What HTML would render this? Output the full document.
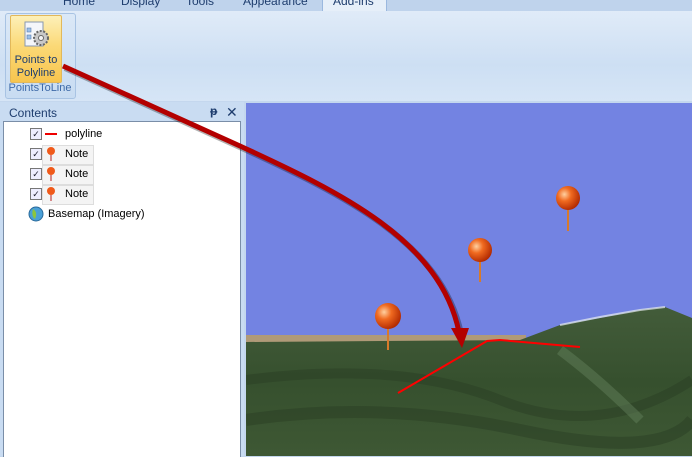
<!DOCTYPE html>
<html><head><style>
body{margin:0;width:692px;height:456px;overflow:hidden;position:relative;font-family:"Liberation Sans",sans-serif;background:#c4d7ee}
.tabs{position:absolute;left:0;top:0;width:692px;height:11px;background:#bfd3ec}
.tab{position:absolute;top:-6px;font-size:12px;color:#1e3d6e}
.ribbon{position:absolute;left:0;top:11px;width:692px;height:90px;background:linear-gradient(#e0ebf8,#cddff3 60%,#d6e5f6)}
.grp{position:absolute;left:5px;top:13px;width:69px;height:84px;border:1px solid #a8c3e3;border-radius:3px;background:linear-gradient(#dbe8f7,#c8dcf2)}
.btn{position:absolute;left:10px;top:15px;width:50px;height:66px;border:1px solid #e2b85a;border-radius:2px;background:linear-gradient(#fdf0b8,#fbd977 45%,#f7c54e)}
.btn span{position:absolute;left:0;top:38px;width:50px;text-align:center;font-size:11px;line-height:13px;color:#1e3d6e}
.glab{position:absolute;left:6px;top:82px;width:68px;text-align:center;font-size:11px;color:#3e6aa8}
.panel{position:absolute;left:0;top:102px;width:244px;height:354px;background:#c9dcf2}
.head{position:absolute;left:3px;top:103px;width:237px;height:18px;font-size:12px;color:#1e3d6e}
.list{position:absolute;left:3px;top:121px;width:236px;height:335px;background:#fff;border:1px solid #7a8ea8;border-bottom:none}
.row{position:absolute;font-size:11px;color:#000}
.cb{position:absolute;width:10px;height:10px;border:1px solid #777;background:#eef;font-size:9px;line-height:10px;text-align:center;color:#223}
.nbox{position:absolute;width:50px;height:18px;border:1px solid #ddd;background:#f4f4f4}
.map{position:absolute;left:246px;top:103px;width:446px;height:353px;background:#7383e2;overflow:hidden}
</style></head><body>
<div class="tabs">
<div class="tab" style="left:63px">Home</div>
<div class="tab" style="left:121px">Display</div>
<div class="tab" style="left:186px">Tools</div>
<div class="tab" style="left:243px">Appearance</div>
<div style="position:absolute;left:322px;top:0;width:63px;height:11px;background:#e6eff9;border:1px solid #9ab8df;border-top:none"></div>
<div class="tab" style="left:333px">Add-ins</div>
</div>
<div class="ribbon"></div>
<div class="grp"></div>
<div class="btn">
<svg style="position:absolute;left:12px;top:4px" width="28" height="30"><rect x="2" y="2" width="18" height="24" fill="#f4f6fa" stroke="#8898b0"/><rect x="4" y="8" width="4" height="4" fill="#9cc0e8" stroke="#5a7fb0" stroke-width=".6"/><rect x="4" y="15" width="4" height="4" fill="#9cc0e8" stroke="#5a7fb0" stroke-width=".6"/><circle cx="18" cy="18" r="7" fill="#c8c8c8" stroke="#666" stroke-width="2" stroke-dasharray="2 1.5"/><circle cx="18" cy="18" r="2.5" fill="#f4f4f4" stroke="#666"/></svg>
<span>Points to<br>Polyline</span></div>
<div class="glab">PointsToLine</div>
<div class="panel"></div>
<div class="head"><span style="position:absolute;left:6px;top:3px">Contents</span><span style="position:absolute;left:207px;top:1px;font-size:12px;font-weight:bold">ᵽ</span><span style="position:absolute;left:223px;top:1px;font-size:14px">✕</span></div>
<div class="list">
<div class="cb" style="left:26px;top:6px">✓</div>
<div style="position:absolute;left:41px;top:11px;width:12px;height:2px;background:#e00"></div>
<div class="row" style="left:61px;top:6px">polyline</div>
<div class="nbox" style="left:38px;top:23px"></div><div class="cb" style="left:26px;top:26px">✓</div>
<div class="row" style="left:61px;top:26px">Note</div>
<div class="nbox" style="left:38px;top:43px"></div><div class="cb" style="left:26px;top:46px">✓</div>
<div class="row" style="left:61px;top:46px">Note</div>
<div class="nbox" style="left:38px;top:63px"></div><div class="cb" style="left:26px;top:66px">✓</div>
<div class="row" style="left:61px;top:66px">Note</div>
<svg style="position:absolute;left:40px;top:24px" width="14" height="60"><g><circle cx="7" cy="5" r="4" fill="#f05a1a"/><line x1="7" y1="9" x2="7" y2="15" stroke="#c66" stroke-width="1.5"/></g><g transform="translate(0,20)"><circle cx="7" cy="5" r="4" fill="#f05a1a"/><line x1="7" y1="9" x2="7" y2="15" stroke="#c66" stroke-width="1.5"/></g><g transform="translate(0,40)"><circle cx="7" cy="5" r="4" fill="#f05a1a"/><line x1="7" y1="9" x2="7" y2="15" stroke="#c66" stroke-width="1.5"/></g></svg>
<svg style="position:absolute;left:24px;top:84px" width="16" height="16"><circle cx="8" cy="8" r="7" fill="#4aa0d8" stroke="#2a6a9a"/><path d="M5 3 Q10 6 7 13 Q3 10 5 3" fill="#8cc63f"/></svg>
<div class="row" style="left:44px;top:86px">Basemap (Imagery)</div>
</div>
<div class="map">
<svg width="446" height="353" viewBox="246 103 446 353">
<defs><linearGradient id="t" x1="0" y1="0" x2="0" y2="1"><stop offset="0" stop-color="#435c3a"/><stop offset=".5" stop-color="#36502e"/><stop offset="1" stop-color="#3e5834"/></linearGradient>
<radialGradient id="p" cx=".35" cy=".35" r=".7"><stop offset="0" stop-color="#ffd0a0"/><stop offset=".4" stop-color="#f06a20"/><stop offset="1" stop-color="#b02800"/></radialGradient></defs>
<rect x="246" y="335" width="280" height="9" fill="#b09a78"/>
<polygon points="246,342 520,340 560,325 600,318 640,310 665,307 692,318 692,456 246,456" fill="url(#t)"/>
<path d="M560,325 L600,317 640,310 665,307" stroke="#e8eef0" stroke-width="2" fill="none" opacity=".7"/>
<path d="M246,380 Q400,360 500,400 T692,380" stroke="#2a3e24" stroke-width="10" fill="none" opacity=".5"/>
<path d="M246,420 Q380,400 520,430 T692,420" stroke="#2a3e24" stroke-width="12" fill="none" opacity=".5"/>
<path d="M560,350 Q600,380 640,420" stroke="#6c8a64" stroke-width="10" fill="none" opacity=".4"/>
<polyline points="398,393 487,341 500,340 580,347" stroke="#f00" stroke-width="2" fill="none"/>
<g><line x1="568" y1="208" x2="568" y2="231" stroke="#d87a2a" stroke-width="2"/><circle cx="568" cy="198" r="12" fill="url(#p)"/></g>
<g><line x1="480" y1="260" x2="480" y2="282" stroke="#d87a2a" stroke-width="2"/><circle cx="480" cy="250" r="12" fill="url(#p)"/></g>
<g><line x1="388" y1="326" x2="388" y2="350" stroke="#d87a2a" stroke-width="2"/><circle cx="388" cy="316" r="13" fill="url(#p)"/></g>
</svg></div>
<svg style="position:absolute;left:0;top:0" width="692" height="456">
<path d="M63,66 L240,146 C340,192 440,240 459,332" stroke="#000" stroke-opacity=".3" stroke-width="6" fill="none" transform="translate(2,2)"/>
<path d="M63,66 L240,146 C340,192 440,240 459,332" stroke="#b30000" stroke-width="5" fill="none"/>
<polygon points="451,328 469,328 462,348" fill="#b30000"/>
</svg>
</body></html>
